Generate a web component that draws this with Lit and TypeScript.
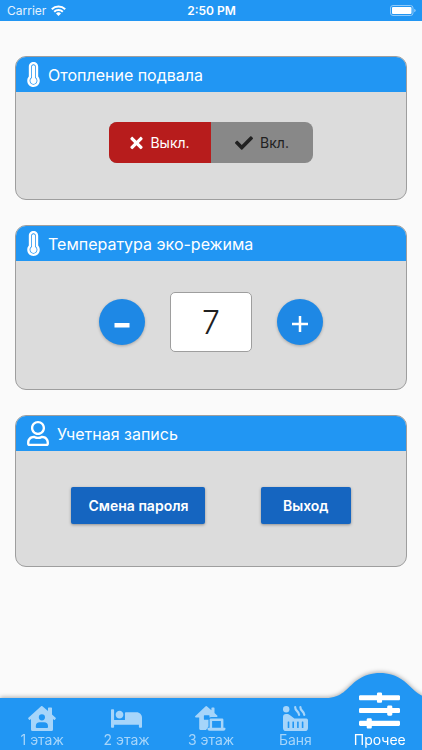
import { LitElement, html, css, svg, nothing } from "lit";
import { customElement, property, state } from "lit/decorators.js";
import { classMap } from "lit/directives/class-map.js";

const thermometer = svg`<svg class="icon" width="13" height="25" viewBox="0 0 256 512" aria-hidden="true"><path d="M224 96c0-53.019-42.981-96-96-96S32 42.981 32 96v203.347C12.225 321.756.166 351.136.002 383.333c-.359 70.303 56.787 128.176 127.089 128.664.299.002.61.003.909.003 70.698 0 128-57.304 128-128 0-32.459-12.088-62.09-32-84.653V96zm-96 368l-.576-.002c-43.86-.304-79.647-36.544-79.423-80.42.173-33.98 19.266-51.652 31.999-66.08V96c0-26.467 21.533-48 48-48s48 21.533 48 48v221.498c12.63 14.312 32 32.164 32 66.502 0 44.112-35.888 80-80 80zm64-80c0 35.346-28.654 64-64 64s-64-28.654-64-64c0-23.685 12.876-44.349 32-55.417V96c0-17.673 14.327-32 32-32s32 14.327 32 32v232.583c19.124 11.068 32 31.732 32 55.417z"/></svg>`;

const user = svg`<svg class="icon" width="22" height="25" viewBox="0 0 448 512" aria-hidden="true"><path d="M313.6 304c-28.7 0-42.5 16-89.6 16-47.1 0-60.8-16-89.6-16C60.2 304 0 364.2 0 438.4V464c0 26.5 21.5 48 48 48h352c26.5 0 48-21.5 48-48v-25.6c0-74.2-60.2-134.4-134.4-134.4zM400 464H48v-25.6c0-47.6 38.8-86.4 86.4-86.4 14.6 0 38.3 16 89.6 16 51.7 0 74.9-16 89.6-16 47.6 0 86.4 38.8 86.4 86.4V464zM224 288c79.5 0 144-64.5 144-144S303.5 0 224 0 80 64.5 80 144s64.5 144 144 144zm0-240c52.9 0 96 43.1 96 96s-43.1 96-96 96-96-43.1-96-96 43.1-96 96-96z"/></svg>`;

const cross = svg`<svg class="icon" width="13" height="18" viewBox="0 0 352 512" aria-hidden="true"><path d="M242.72 256l100.07-100.07c12.28-12.28 12.28-32.19 0-44.48l-22.24-22.24c-12.28-12.28-32.19-12.28-44.48 0L176 189.28 75.93 89.21c-12.28-12.28-32.19-12.28-44.48 0L9.21 111.45c-12.28 12.28-12.28 32.19 0 44.48L109.28 256 9.21 356.07c-12.28 12.28-12.28 32.19 0 44.48l22.24 22.24c12.28 12.28 32.2 12.28 44.48 0L176 322.72l100.07 100.07c12.28 12.28 32.2 12.28 44.48 0l22.24-22.24c12.28-12.28 12.28-32.19 0-44.48L242.72 256z"/></svg>`;

const check = svg`<svg class="icon" width="18" height="18" viewBox="0 0 512 512" aria-hidden="true"><path d="M173.898 439.404l-166.4-166.4c-9.997-9.997-9.997-26.206 0-36.204l36.203-36.204c9.997-9.998 26.207-9.998 36.204 0L192 312.69 432.095 72.596c9.997-9.997 26.207-9.997 36.204 0l36.203 36.204c9.997 9.997 9.997 26.206 0 36.204l-294.4 294.401c-9.998 9.997-26.207 9.997-36.204-.001z"/></svg>`;

const houseUser = svg`<svg class="icon" width="28" height="25" viewBox="0 0 28 25" aria-hidden="true"><path fill-rule="evenodd" d="M12.8.4a1.4 1.4 0 0 1 1.9 0L20 5V2.1q0-.7.7-.7h2.6q.7 0 .7.7v6.5l3.6 3.2q.5.5.1 1l-.8.9q-.5.5-1 .1l-.9-.8v10.5q0 1.5-1.5 1.5h-19Q3 25 3 23.500V13l-.9.8q-.5.4-1-.1l-.8-.9q-.4-.5.1-1zM13.900 8.200a3.100 3.100 0 1 0 0 6.200 3.100 3.100 0 0 0 0-6.200zM11.800 16.200a4 4 0 0 0-4 4v.9q0 .9.9.9h10.400q.9 0 .9-.9v-.9a4 4 0 0 0-4-4z"/></svg>`;

const bed = svg`<svg class="icon" width="31" height="25" viewBox="0 0 640 512" aria-hidden="true"><path d="M176 256c44.11 0 80-35.89 80-80s-35.89-80-80-80-80 35.89-80 80 35.89 80 80 80zm352-128H304c-8.84 0-16 7.16-16 16v144H64V80c0-8.84-7.16-16-16-16H16C7.16 64 0 71.16 0 80v352c0 8.84 7.16 16 16 16h32c8.84 0 16-7.16 16-16v-48h512v48c0 8.84 7.16 16 16 16h32c8.84 0 16-7.16 16-16V240c0-61.86-50.14-112-112-112z"/></svg>`;

const houseLaptop = svg`<svg class="icon" width="31" height="25" viewBox="0 0 31 25" aria-hidden="true"><path fill-rule="evenodd" d="M10.400.4a1.300 1.300 0 0 1 1.700 0L16.400 4.200V2.200q0-.6.6-.6h1.900q.6 0 .6.6v4.800l2.700 2.400q.6.6.2 1.100l-.4.500H16.600q-3.100 0-3.100 3.100v6.500l-2.500 3.300H5.300q-1.100 0-1.100-1.100V11.500H1q-1.500-.5-.6-1.500zM9.400 9.300q-.5 0-.5.5v3.400q0 .5.5.5h4.100q0-1.500 1-2.300V9.800q0-.5-.5-.5z"/><path fill-rule="evenodd" d="M15.800 12.500h11.400q1.200 0 1.200 1.200v8.100h1.500q.6 0 .6.6v.4q0 2-2 2H14.400q-2 0-2-2v-.4q0-.6.6-.6h1.600v-8.100q0-1.200 1.200-1.200zm1.300 2.600v6.600h8.800v-6.600z"/></svg>`;

const hotTub = svg`<svg class="icon" width="25" height="25" viewBox="0 0 25 25" aria-hidden="true"><circle cx="3.200" cy="3.200" r="3.200"/><path fill-rule="evenodd" d="M0 11.100A3 3 0 0 1 3 8.100h1.600q1 0 1.800.6l5 3.900h12q1.600 0 1.600 1.600v7.700q0 3.100-3.100 3.100H3.100Q0 25 0 21.900zM4.700 16v5.500q0 .5.500.5h.6q.5 0 .5-.5V16q0-.5-.5-.5h-.6q-.5 0-.5.5zm4.700 0v5.500q0 .5.500.5h.6q.5 0 .5-.5V16q0-.5-.5-.5h-.6q-.5 0-.5.5zm4.700 0v5.500q0 .5.500.5h.6q.5 0 .5-.5V16q0-.5-.5-.5h-.6q-.5 0-.5.5zm4.700 0v5.500q0 .5.500.5h.6q.5 0 .5-.5V16q0-.5-.5-.5h-.6q-.5 0-.5.5z"/><path fill="none" stroke="currentColor" stroke-width="2.200" stroke-linecap="round" d="M12.200 1.200c0 4.200 3.600 3.500 3.900 7.600M17.400 1.200c0 4.200 3.600 3.500 3.900 7.600"/></svg>`;

const sliders = svg`<svg class="icon" width="41" height="41" viewBox="0 0 512 512" aria-hidden="true"><path d="M496 384H160v-16c0-8.800-7.200-16-16-16h-32c-8.800 0-16 7.200-16 16v16H16c-8.800 0-16 7.200-16 16v32c0 8.800 7.200 16 16 16h80v16c0 8.800 7.200 16 16 16h32c8.800 0 16-7.200 16-16v-16h336c8.800 0 16-7.200 16-16v-32c0-8.800-7.200-16-16-16zm0-160h-80v-16c0-8.800-7.200-16-16-16h-32c-8.800 0-16 7.200-16 16v16H16c-8.800 0-16 7.200-16 16v32c0 8.800 7.200 16 16 16h336v16c0 8.800 7.200 16 16 16h32c8.800 0 16-7.200 16-16v-16h80c8.800 0 16-7.200 16-16v-32c0-8.800-7.200-16-16-16zm0-160H288V48c0-8.800-7.200-16-16-16h-32c-8.800 0-16 7.200-16 16v16H16C7.200 64 0 71.200 0 80v32c0 8.800 7.200 16 16 16h208v16c0 8.800 7.200 16 16 16h32c8.800 0 16-7.200 16-16v-16h208c8.800 0 16-7.200 16-16V80c0-8.800-7.200-16-16-16z"/></svg>`;

const tabs = [
  { label: "1 этаж", icon: houseUser },
  { label: "2 этаж", icon: bed },
  { label: "3 этаж", icon: houseLaptop },
  { label: "Баня", icon: hotTub },
  { label: "Прочее", icon: sliders },
];

@customElement("status-bar")
class StatusBar extends LitElement {
  static styles = css`
    :host {
      display: grid;
      grid-template-columns: 1fr auto 1fr;
      align-items: center;
      height: 21px;
      padding: 0 6px 0 7px;
      background: #2196f3;
      color: #fff;
      font-size: 12px;
      line-height: 20px;
    }
    .carrier {
      display: flex;
      align-items: center;
      gap: 5px;
      color: #e4f2fe;
    }
    .time {
      font-weight: 600;
    }
    .battery {
      justify-self: end;
    }
  `;

  render() {
    return html`
      <span class="carrier">
        Carrier
        <svg width="15" height="11" viewBox="0 0 15 11" aria-hidden="true">
          <g fill="none" stroke="#fff" stroke-width="2">
            <path d="M.8 4.200a9.500 9.500 0 0 1 13.400 0" />
            <path d="M3.200 6.700a6.100 6.100 0 0 1 8.600 0" />
          </g>
          <path fill="#fff" d="M7.500 11 5 8.500a3.600 3.600 0 0 1 5 0z" />
        </svg>
      </span>
      <span class="time">2:50 PM</span>
      <svg class="battery" width="26" height="11" viewBox="0 0 26 11" aria-hidden="true">
        <rect x=".5" y=".5" width="22.500" height="10" rx="2.500" fill="none" stroke="#8fcafa" />
        <rect x="2" y="2" width="19.500" height="7" rx="1" fill="#fff" />
        <path d="M24.200 3.700q1.500.6 1.500 1.800t-1.500 1.800z" fill="#8fcafa" />
      </svg>
    `;
  }
}

@customElement("settings-card")
class SettingsCard extends LitElement {
  @property() heading = "";
  @property({ attribute: false }) icon: unknown = nothing;

  static styles = css`
    :host {
      display: block;
      border: 1px solid #9e9e9e;
      border-radius: 11px;
      overflow: hidden;
      background: #dcdcdc;
    }
    .header {
      display: flex;
      align-items: center;
      gap: 8px;
      height: 35px;
      padding: 0 11px;
      background: #2196f3;
      color: #fff;
    }
    .icon {
      flex: none;
      fill: currentColor;
    }
    .title {
      margin: 0;
      font-size: 16px;
      font-weight: 400;
      line-height: 24px;
    }
  `;

  render() {
    return html`
      <header class="header">
        ${this.icon}
        <h2 class="title">${this.heading}</h2>
      </header>
      <slot></slot>
    `;
  }
}

@customElement("tab-bar")
class TabBar extends LitElement {
  @state() private active = 4;

  static styles = css`
    :host {
      display: block;
      background: #2196f3;
      filter: drop-shadow(0 -1px 2px rgba(0, 0, 0, 0.3));
    }
    .tabs {
      display: grid;
      grid-template-columns: repeat(5, 1fr);
      grid-template-rows: 52px;
    }
    .tab {
      position: relative;
      display: flex;
      flex-direction: column;
      align-items: center;
      justify-content: flex-end;
      min-width: 0;
      margin: 0;
      padding: 0 0 1px;
      border: 0;
      background: none;
      color: #a6d5fa;
      font: inherit;
      font-size: 14px;
      line-height: 18px;
      cursor: pointer;
    }
    .tab.active {
      color: #fff;
    }
    .icon {
      position: relative;
      flex: none;
      fill: currentColor;
    }
    .label {
      position: relative;
    }
    .bump {
      position: absolute;
      bottom: 100%;
      left: 50%;
      margin-left: -54px;
      fill: #2196f3;
    }
  `;

  render() {
    return html`
      <nav class="tabs">
        ${tabs.map(
          (tab, index) => html`
            <button
              type="button"
              class=${classMap({ tab: true, active: index === this.active })}
              aria-current=${index === this.active ? "page" : nothing}
              @click=${() => (this.active = index)}
            >
              ${index === this.active
                ? svg`<svg class="bump" width="108" height="25" viewBox="0 0 108 25" aria-hidden="true"><path d="M0 25C16 25 21 15 30 8C38 2 46 0 54 0S70 2 78 8C87 15 92 25 108 25Z"/></svg>`
                : nothing}
              ${tab.icon}
              <span class="label">${tab.label}</span>
            </button>
          `
        )}
      </nav>
    `;
  }
}

@customElement("app-root")
class AppRoot extends LitElement {
  @state() private heating = false;
  @state() private temperature = 7;

  static styles = css`
    :host {
      display: flex;
      flex-direction: column;
      min-height: 100vh;
      overflow: hidden;
      background: #fafafa;
      color: #212121;
      font-family: Inter, "Noto Sans", sans-serif;
    }
    .content {
      flex: 1;
      display: flex;
      flex-direction: column;
      gap: 25px;
      padding: 35px 15px;
    }
    .row {
      display: flex;
      align-items: center;
      justify-content: center;
    }
    .heating {
      padding: 30px 0 36px;
    }
    .switch {
      display: grid;
      grid-template-columns: 1fr 1fr;
      width: 204px;
      height: 41px;
      margin: 0;
      padding: 0;
      border: 0;
      border-radius: 8px;
      overflow: hidden;
      background: #888;
    }
    .option {
      position: relative;
      display: flex;
      align-items: center;
      justify-content: center;
      gap: 7px;
      font-size: 14px;
      line-height: 20px;
      cursor: pointer;
    }
    .option.selected {
      background: #b71c1c;
      color: #fff;
    }
    .radio {
      position: absolute;
      inset: 0;
      width: 100%;
      height: 100%;
      margin: 0;
      opacity: 0;
      cursor: pointer;
    }
    .icon {
      flex: none;
      fill: currentColor;
    }
    .stepper {
      gap: 25px;
      padding: 31px 0 37px;
    }
    .round {
      display: flex;
      align-items: center;
      justify-content: center;
      width: 46px;
      height: 46px;
      padding: 0;
      border: 0;
      border-radius: 50%;
      background: #1e88e5;
      color: #fff;
      box-shadow: 0 1px 3px rgba(0, 0, 0, 0.25);
      cursor: pointer;
    }
    .value {
      box-sizing: border-box;
      width: 82px;
      height: 60px;
      padding: 0;
      border: 1px solid #9e9e9e;
      border-radius: 5px;
      background: #fff;
      color: #212121;
      font: inherit;
      font-size: 32px;
      font-weight: 300;
      text-align: center;
    }
    .account {
      justify-content: space-evenly;
      padding: 36px 0 42px;
    }
    .action {
      height: 37px;
      padding: 0 17px;
      border: 0;
      border-radius: 2px;
      background: #1565c0;
      color: #fff;
      box-shadow: 0 1px 3px rgba(0, 0, 0, 0.35);
      font: inherit;
      font-size: 14px;
      font-weight: 600;
      line-height: 20px;
      cursor: pointer;
    }
    .action.wide {
      padding: 0 22px;
    }
  `;

  private option(label: string, on: boolean, icon: unknown) {
    return html`
      <label class=${classMap({ option: true, selected: this.heating === on })}>
        <input
          class="radio"
          type="radio"
          name="heating"
          .checked=${this.heating === on}
          @change=${() => (this.heating = on)}
        />
        ${icon}
        <span>${label}</span>
      </label>
    `;
  }

  render() {
    return html`
      <status-bar></status-bar>
      <main class="content">
        <settings-card heading="Отопление подвала" .icon=${thermometer}>
          <div class="row heating">
            <fieldset class="switch" aria-label="Отопление подвала">
              ${this.option("Выкл.", false, cross)} ${this.option("Вкл.", true, check)}
            </fieldset>
          </div>
        </settings-card>
        <settings-card heading="Температура эко-режима" .icon=${thermometer}>
          <div class="row stepper">
            <button class="round" type="button" aria-label="Уменьшить" @click=${() => this.temperature--}>
              <svg width="24" height="24" viewBox="0 0 24 24" aria-hidden="true">
                <path d="M4.500 13h15v4.500h-15z" fill="currentColor" />
              </svg>
            </button>
            <input
              class="value"
              type="text"
              inputmode="numeric"
              aria-label="Температура эко-режима"
              .value=${String(this.temperature)}
              @change=${(e: Event) => (this.temperature = Number((e.target as HTMLInputElement).value))}
            />
            <button class="round" type="button" aria-label="Увеличить" @click=${() => this.temperature++}>
              <svg width="24" height="24" viewBox="0 0 24 24" aria-hidden="true">
                <path d="M4 14h16M12 6v16" fill="none" stroke="currentColor" stroke-width="2.500" />
              </svg>
            </button>
          </div>
        </settings-card>
        <settings-card heading="Учетная запись" .icon=${user}>
          <div class="row account">
            <button class="action" type="button">Смена пароля</button>
            <button class="action wide" type="button">Выход</button>
          </div>
        </settings-card>
      </main>
      <tab-bar></tab-bar>
    `;
  }
}
